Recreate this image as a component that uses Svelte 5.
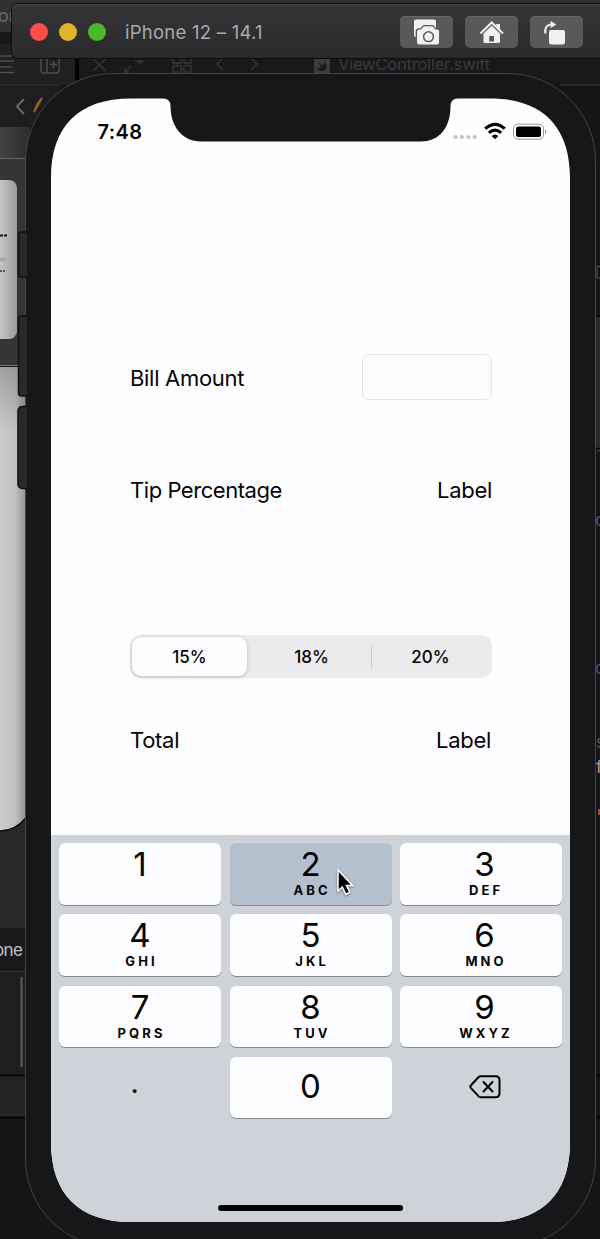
<script>
  const keys = [
    { digit: '1', letters: '' },
    { digit: '2', letters: 'ABC', pressed: true },
    { digit: '3', letters: 'DEF' },
    { digit: '4', letters: 'GHI' },
    { digit: '5', letters: 'JKL' },
    { digit: '6', letters: 'MNO' },
    { digit: '7', letters: 'PQRS' },
    { digit: '8', letters: 'TUV' },
    { digit: '9', letters: 'WXYZ' }
  ];
  const rates = ['15%', '18%', '20%'];
  let selected = 0;
</script>

<div class="desktop">
  <svg class="backdrop" width="600" height="1239" viewBox="0 0 600 1239">
    <defs>
      <linearGradient id="card" x1="0" y1="0" x2="1" y2="0">
        <stop offset="0" stop-color="#d4d3d5" />
        <stop offset="0.5" stop-color="#c9c8ca" />
        <stop offset="1" stop-color="#9b9a9c" />
      </linearGradient>
      <linearGradient id="sheet" x1="0" y1="0" x2="1" y2="0">
        <stop offset="0" stop-color="#cbcacc" />
        <stop offset="0.6" stop-color="#c0bfc1" />
        <stop offset="1" stop-color="#8f8e90" />
      </linearGradient>
      <linearGradient id="sheetTop" x1="0" y1="0" x2="0" y2="1">
        <stop offset="0" stop-color="#555" stop-opacity="0.35" />
        <stop offset="1" stop-color="#555" stop-opacity="0" />
      </linearGradient>
      <linearGradient id="band" x1="0" y1="0" x2="1" y2="0">
        <stop offset="0" stop-color="#434244" />
        <stop offset="1" stop-color="#2c2b2d" />
      </linearGradient>
    </defs>
    <rect width="600" height="1239" fill="#151416" />
    <rect width="600" height="4" fill="#303031" />
    <rect width="30" height="32" fill="#313032" />
    <text x="-2" y="22" font-size="18" fill="#6c6b6d">or</text>
    <rect y="32" width="30" height="12" fill="#171618" />
    <rect y="44" width="76" height="41" fill="#201f21" />
    <rect x="79" y="44" width="521" height="41" fill="#19181a" />
    <rect x="75" y="56" width="4" height="24" fill="#020202" />
    <g stroke="#4d4c4e" stroke-width="1.5" fill="none">
      <path d="M0 56H12M0 61H14M0 67H12M0 72.500H14" />
      <rect x="41" y="56" width="18" height="17" rx="3" />
      <path d="M47 56V73M50 64.500H57M53.500 61V68" />
    </g>
    <g stroke="#353436" stroke-width="1.400" fill="none">
      <path d="M93 59L106 71M106 59L93 71M125 72L131 66M125 68V72H129M135 61H141M138 64L142 60M142 60V64" />
      <path d="M173 58H181V63H173ZM184 58H191V63H184ZM173 66H181V72H173ZM184 66H191V72H184ZM177 63V66M188 63V66M181 69H184" />
      <path d="M223 58L217 64L223 70M251 58L257 64L251 70" />
    </g>
    <rect x="314" y="58" width="16" height="16" rx="2" fill="#3c3b3d" />
    <path d="M317 69Q322 73 326 69Q328 67 324 61Q325 65 322 65L318 62Q320 66 322 67Q319 68 317 69Z" fill="#1b1a1c" />
    <text x="338" y="70" font-size="16.500" textLength="152" fill="#3a393b">ViewController.swift</text>
    <path d="M0 85H60M560 85H600" stroke="#38373a" />
    <rect y="86" width="60" height="41" fill="#1e1d1f" />
    <path d="M24 99L17 106.500L24 114" stroke="#69686a" stroke-width="2" fill="none" />
    <path d="M42 98L34 112L38 103Z" fill="#8f681c" stroke="#8f681c" stroke-width="2" />
    <rect y="127" width="30" height="32" fill="url(#band)" />
    <path d="M0 158.500H30" stroke="#68676a" />
    <rect y="159" width="30" height="207" fill="#353436" />
    <rect x="-20" y="180" width="37" height="159" rx="8" fill="url(#card)" />
    <path d="M0 235.500H7" stroke="#171717" stroke-width="2" stroke-dasharray="3 1" />
    <path d="M0 259.500H6" stroke="#aaa" stroke-width="4" />
    <path d="M0 271H5" stroke="#333" stroke-width="1.500" stroke-dasharray="2 1" />
    <path d="M0 365.500H30" stroke="#777678" />
    <rect y="367" width="26" height="561" fill="#29282a" />
    <path d="M0 367H26V817Q15 831 0 831Z" fill="url(#sheet)" />
    <rect y="367" width="26" height="65" fill="url(#sheetTop)" />
    <path d="M0 831Q15 831 26 818" stroke="#0c0c0c" stroke-width="1.500" fill="none" />
    <rect y="928" width="26" height="43" fill="#19181a" />
    <text x="-6" y="956" font-size="17" textLength="29" fill="#c5c4c6">one</text>
    <path d="M0 971.500H26" stroke="#3b3a3c" />
    <rect y="972" width="26" height="103" fill="#1e1d1f" />
    <path d="M21.500 977V1067" stroke="#5e5d5f" stroke-width="2" />
    <path d="M0 1075.500H26M0 1117.500H26" stroke="#000" stroke-width="1.500" />
    <rect y="1076.500" width="26" height="40" fill="#232224" />

    <path d="M600 266.500H597V278H600" stroke="#555456" fill="none" />
    <rect x="594" y="317" width="6" height="131" fill="#2b2a29" />
    <path d="M594 316H600M594 448.500H600" stroke="#000" stroke-width="1.500" />
    <path d="M597 450.500H600" stroke="#555" />
    <g font-size="17">
      <text x="595" y="526" fill="#5d4b85">o</text>
      <text x="595" y="674" fill="#5d4b85">o</text>
      <text x="596" y="748" fill="#59585a">s</text>
      <text x="596" y="773" fill="#a09fa1">f</text>
    </g>
    <rect x="598" y="809" width="2" height="6" fill="#a84b35" />
    <path d="M595 1075.500H600M595 1117.500H600" stroke="#000" stroke-width="2" />
  </svg>

  <header class="titlebar">
    <div class="lights"><i class="close"></i><i class="minimize"></i><i class="expand"></i></div>
    <h1>iPhone 12 – 14.1</h1>
    <div class="tools">
      <button aria-label="Screenshot">
        <svg width="53" height="32" viewBox="0 0 53 32">
          <rect x="14" y="3.500" width="22" height="17.500" rx="2" fill="#f2f1f2" />
          <path d="M19 13.500H21L23.200 11Q23.800 10.300 24.800 10.300H31.700Q32.700 10.300 33.300 11L35.300 13.500H37Q39 13.500 39 15.500V26.500Q39 28.500 37 28.500H19Q17 28.500 17 26.500V15.500Q17 13.500 19 13.500Z" fill="#f2f1f2" stroke="#5a585a" stroke-width="2.600" paint-order="stroke" />
          <circle cx="28.500" cy="20.700" r="4.900" fill="none" stroke="#5a585a" stroke-width="1.500" />
        </svg>
      </button>
      <button aria-label="Home">
        <svg width="53" height="32" viewBox="0 0 53 32">
          <path d="M18.500 17L26.500 9.200L35 17V25.500Q35 27 33.500 27H20Q18.500 27 18.500 25.500Z" fill="#f2f1f2" />
          <rect x="24.300" y="20" width="4.700" height="5.500" fill="#5a585a" />
          <path d="M15.500 17.500L26.700 6.500L38 17.500" fill="none" stroke="#5a585a" stroke-width="4.200" />
          <path d="M15.500 17.500L26.700 6.500L38 17.500" fill="none" stroke="#f2f1f2" stroke-width="2" />
          <path d="M31.300 8H35V14.500L31.300 11Z" fill="#f2f1f2" />
        </svg>
      </button>
      <button aria-label="Rotate">
        <svg width="53" height="32" viewBox="0 0 53 32">
          <rect x="19" y="14" width="16" height="14.500" rx="2.200" fill="#f2f1f2" />
          <path d="M15.500 17.500Q14 9 21.500 8.500" fill="none" stroke="#f2f1f2" stroke-width="2.100" />
          <path d="M20.500 5L26.500 8.500L20.500 12Z" fill="#f2f1f2" />
        </svg>
      </button>
    </div>
  </header>

  <main class="phone">
    <div class="screen">
      <div class="status">
        <time>7:48</time>
        <svg width="94" height="20" viewBox="0 0 94 20">
          <g fill="#c4c3c5"><circle cx="4.500" cy="15" r="2.100" /><circle cx="10.900" cy="15" r="2.100" /><circle cx="17.300" cy="15" r="2.100" /><circle cx="23.700" cy="15" r="2.100" /></g>
          <g fill="none" stroke="#000" stroke-width="3"><path d="M34.200 6.700Q44 -2 53.800 6.700" /><path d="M37.900 10.900Q44 5.400 50.100 10.900" /></g>
          <path d="M40.700 14Q44 11 47.300 14L44 17.300Z" />
          <rect x="62.500" y="2.200" width="30" height="15" rx="4.400" fill="none" stroke="#969597" />
          <rect x="65" y="4.500" width="25" height="10.500" rx="2.200" />
          <path d="M94 7.500Q96 9.700 94 12Z" fill="#777" />
        </svg>
      </div>

      <section class="form">
        <div class="row bill"><label for="bill">Bill Amount</label><input id="bill" /></div>
        <div class="row tip"><span class="tip-name">Tip Percentage</span><span>Label</span></div>
        <div class="segments">
          {#each rates as rate, i}
            <button class:selected={selected === i} class:divided={i === 2} onclick={() => (selected = i)}>{rate}</button>
          {/each}
        </div>
        <div class="row total"><span>Total</span><span>Label</span></div>
      </section>

      <section class="keyboard">
        <div class="keys">
          {#each keys as key, i}
            <button class="key" class:pressed={key.pressed} class:third={i % 3 === 2}><b>{key.digit}</b>{#if key.letters}<small>{key.letters}</small>{/if}</button>
          {/each}
          <button class="key flat"><span class="point">.</span></button>
          <button class="key zero"><b>0</b></button>
          <button class="key flat" aria-label="Delete">
            <svg width="32" height="24" viewBox="0 0 32 24" fill="none" stroke="#000" stroke-width="2">
              <path d="M11.500 1.200H26.500Q30.500 1.200 30.500 5.200V18.200Q30.500 22.200 26.500 22.200H11.500Q10.500 22.200 9.700 21.400L2 13.200Q.7 11.700 2 10.200L9.700 2Q10.500 1.200 11.500 1.200Z" />
              <path d="M14.500 7L23.500 16.500M23.500 7L14.500 16.500" stroke-linecap="round" />
            </svg>
          </button>
        </div>
        <div class="home-bar"></div>
      </section>
    </div>
  </main>

  <svg class="side-buttons" width="10" height="260" viewBox="0 0 10 260">
    <g fill="#29282a" stroke="#111012" stroke-width="1.500">
      <rect x="1.500" y="2" width="12" height="45" rx="3" />
      <rect x="1.500" y="86" width="12" height="80" rx="3" />
      <rect x="1" y="176.500" width="12" height="82" rx="4" />
    </g>
  </svg>

  <svg class="cursor" width="20" height="30" viewBox="0 0 20 30">
    <path d="M2 2V23L6.300 19L9.800 26.300L13.800 24.500L10.500 17.500H16.500Z" fill="#000" stroke="#fff" stroke-width="1.500" />
  </svg>
</div>

<style>
  :global(body) { margin: 0; background: #151416; }
  .desktop {
    position: relative;
    width: 600px;
    height: 1239px;
    overflow: hidden;
    font-family: Inter, sans-serif;
    color: #050505;
  }
  button { font: inherit; color: inherit; border: 0; padding: 0; margin: 0; }
  svg { display: block; }
  .backdrop { position: absolute; inset: 0; }
  .titlebar {
    position: absolute;
    left: 12px;
    top: 4px;
    width: 600px;
    height: 54px;
    box-sizing: border-box;
    display: flex;
    align-items: center;
    padding-left: 18px;
    border-radius: 6px 0 0 6px;
    background: linear-gradient(#353436, #2a292b);
    box-shadow: inset 0 1px #4b4a4c, 0 0 0 1px #0d0d0d;
  }
  .lights { display: flex; gap: 11px; padding-top: 2px; }
  .lights i { width: 18px; height: 18px; border-radius: 50%; }
  .close { background: #fc4e48; }
  .minimize { background: #e0b42a; }
  .expand { background: #4bb82a; }
  h1 {
    margin: 2px 0 0 19px;
    width: 275px;
    font-size: 18.500px;
    line-height: 24px;
    font-weight: 400;
    letter-spacing: 0.25px;
    color: #aaa9ab;
    white-space: nowrap;
  }
  .tools { display: flex; gap: 12px; padding-top: 2px; }
  .tools button {
    width: 53px;
    height: 32px;
    border-radius: 5px;
    background: #5a585a;
    box-shadow: inset 0 1px #676567;
  }
  .phone {
    position: absolute;
    left: 25px;
    top: 73px;
    width: 571px;
    height: 1174px;
    box-sizing: border-box;
    padding: 24px 25px;
    border-radius: 88px;
    border: 1px solid #444345;
    background: #171618;
  }
  .side-buttons { position: absolute; left: 17px; top: 230px; }
  .screen {
    width: 519px;
    height: 1124px;
    display: flex;
    flex-direction: column;
    background: #fefdff;
    clip-path: path('M0 80C0 28 28 0.500 80 0.500H112Q119.500 0.500 119.500 8C119.500 28 131 43.500 150 43.500H370C388 43.500 399.500 30 399.500 8Q399.500 0.500 407 0.500H439C491 0.500 519 28 519 80V1044C519 1096 491 1124 439 1124H80C28 1124 0 1096 0 1044Z');
  }
  .status {
    display: flex;
    justify-content: space-between;
    height: 44px;
    padding: 24px 25.500px 0 46.500px;
  }
  .status svg { overflow: visible; }
  time { font-size: 20px; line-height: 20px; font-weight: 600; letter-spacing: 0.4px; }
  .form {
    flex: 1;
    padding: 188px 78px 0 79px;
    font-size: 22px;
    letter-spacing: -0.3px;
  }
  .row { display: flex; justify-content: space-between; align-items: center; line-height: 30px; }
  .bill { height: 46px; }
  .bill label { padding-top: 2px; }
  .tip-name { letter-spacing: -0.450px; }
  input {
    box-sizing: border-box;
    width: 130px;
    height: 46px;
    border: 1px solid #e4e3e6;
    border-radius: 7px;
    background: #fefdff;
    outline: 0;
  }
  .tip { margin-top: 75px; }
  .segments {
    display: flex;
    height: 43px;
    box-sizing: border-box;
    margin-top: 130px;
    padding: 2px;
    border-radius: 11px;
    background: #ebeaec;
  }
  .segments button {
    flex: 1;
    position: relative;
    background: none;
    border-radius: 9px;
    font-size: 17px;
    font-weight: 500;
  }
  .segments .selected { flex: 0 0 115px; margin-right: 5px; background: #fefdff; box-shadow: 0 1px 4px #00000038; }
  .divided::before {
    content: '';
    position: absolute;
    left: 0;
    top: 8px;
    width: 1px;
    height: 24px;
    background: #cdccd0;
  }
  .total { margin-top: 47px; padding-right: 1px; }
  .keyboard { height: 387px; background: #ced2d9; }
  .keys {
    display: grid;
    grid-template-columns: repeat(3, 162px);
    grid-auto-rows: 61.500px;
    gap: 9.800px 8.500px;
    padding: 8px 8px 0;
  }
  .key {
    display: flex;
    flex-direction: column;
    align-items: center;
    justify-content: flex-start;
    border-radius: 6px;
    background: #fefdff;
    box-shadow: 0 1px #898a8e;
  }
  .key b { margin-top: 4px; font-size: 33px; line-height: 35px; font-weight: 400; }
  .key small {
    font-size: 13px;
    line-height: 16px;
    font-weight: 700;
    letter-spacing: 3.100px;
    margin-right: -3.100px;
  }
  .third { padding-left: 7px; }
  .pressed { background: #b4c0ce; }
  .flat { background: none; box-shadow: none; justify-content: center; }
  .zero { justify-content: center; }
  .zero b { margin: -3px 0 0; }
  .point { font-size: 27px; line-height: 30px; margin: -8px 11px 0 0; font-weight: 500; }
  .flat svg { margin: -2px 0 0 7px; }
  .home-bar { width: 185px; height: 6px; margin: 87px 0 0 167px; border-radius: 3px; background: #000; }
  .cursor { position: absolute; left: 336px; top: 868px; filter: drop-shadow(0 1px 1px #0006); }
</style>
